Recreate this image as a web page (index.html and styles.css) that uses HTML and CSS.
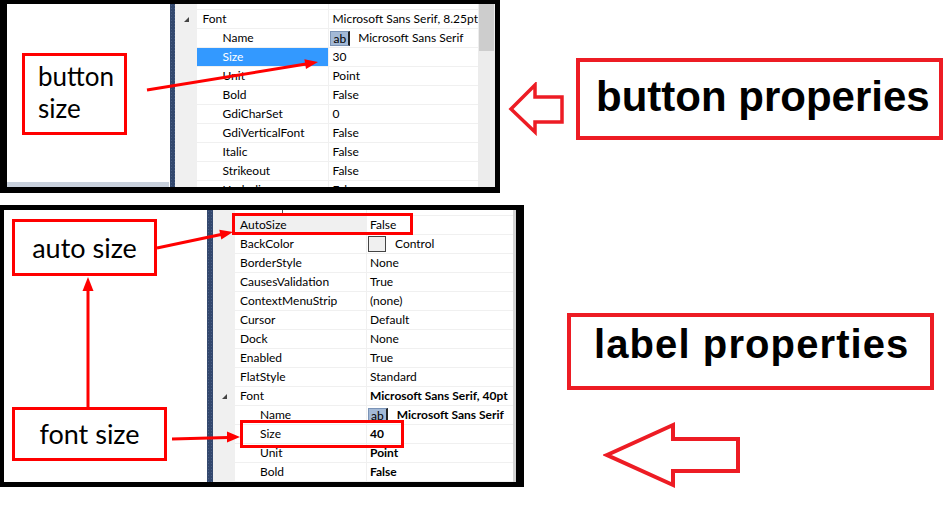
FILE: index.html
```html
<!DOCTYPE html>
<html lang="en">
<head>
  <meta charset="UTF-8">
  <title>Button and label properties</title>
  <link rel="stylesheet" href="styles.css">
</head>
<body>
  <div class="page">

    <!-- Button properties -->
    <div class="band band-top">
      <section class="panel panel-btn">
        <div class="blank">
          <div class="note note-btn">button<br>size</div>
          <div class="blank-bar"></div>
        </div>
        <div class="strip"></div>
        <div class="grid">
          <div class="grid-body">
            <div class="row stub"><span class="gut"></span><span class="k"></span><span class="v"></span></div>
            <div class="row"><span class="gut"><i class="tri"></i></span><span class="k">Font</span><span class="v">Microsoft Sans Serif, 8.25pt</span></div>
            <div class="row"><span class="gut"></span><span class="k sub">Name</span><span class="v"><b class="ab">ab</b>Microsoft Sans Serif</span></div>
            <div class="row"><span class="gut"></span><span class="k sub picked">Size</span><span class="v">30</span></div>
            <div class="row"><span class="gut"></span><span class="k sub">Unit</span><span class="v">Point</span></div>
            <div class="row"><span class="gut"></span><span class="k sub">Bold</span><span class="v">False</span></div>
            <div class="row"><span class="gut"></span><span class="k sub">GdiCharSet</span><span class="v">0</span></div>
            <div class="row"><span class="gut"></span><span class="k sub">GdiVerticalFont</span><span class="v">False</span></div>
            <div class="row"><span class="gut"></span><span class="k sub">Italic</span><span class="v">False</span></div>
            <div class="row"><span class="gut"></span><span class="k sub">Strikeout</span><span class="v">False</span></div>
            <div class="row"><span class="gut"></span><span class="k sub">Underline</span><span class="v">False</span></div>
          </div>
          <div class="scroll"><div class="thumb"></div></div>
        </div>
      </section>

      <svg class="hollow hollow-top" width="58" height="54" viewBox="0 0 58 54">
        <polygon points="3,27 27,3 27,15 54,15 54,40 27,40 27,50" fill="none" stroke="#ed1c24" stroke-width="3.5"/>
      </svg>
      <div class="callout callout-btn">button properies</div>
    </div>

    <!-- Label properties -->
    <div class="band band-bottom">
      <section class="panel panel-lbl">
        <div class="blank blank-lbl">
          <div class="note note-auto">auto size</div>
          <div class="note note-font">font size</div>
        </div>
        <div class="strip"></div>
        <div class="grid">
          <div class="grid-body">
            <div class="row stub"><span class="gut"></span><span class="k"><i class="tick"></i></span><span class="v"></span></div>
            <div class="row"><span class="gut"></span><span class="k dim">AutoSize</span><span class="v">False</span></div>
            <div class="row"><span class="gut"></span><span class="k">BackColor</span><span class="v"><i class="swatch"></i>Control</span></div>
            <div class="row"><span class="gut"></span><span class="k">BorderStyle</span><span class="v">None</span></div>
            <div class="row"><span class="gut"></span><span class="k">CausesValidation</span><span class="v">True</span></div>
            <div class="row"><span class="gut"></span><span class="k">ContextMenuStrip</span><span class="v">(none)</span></div>
            <div class="row"><span class="gut"></span><span class="k">Cursor</span><span class="v">Default</span></div>
            <div class="row"><span class="gut"></span><span class="k">Dock</span><span class="v">None</span></div>
            <div class="row"><span class="gut"></span><span class="k">Enabled</span><span class="v">True</span></div>
            <div class="row"><span class="gut"></span><span class="k">FlatStyle</span><span class="v">Standard</span></div>
            <div class="row"><span class="gut"><i class="tri"></i></span><span class="k">Font</span><span class="v strong">Microsoft Sans Serif, 40pt</span></div>
            <div class="row"><span class="gut"></span><span class="k sub">Name</span><span class="v strong"><b class="ab">ab</b>Microsoft Sans Serif</span></div>
            <div class="row"><span class="gut"></span><span class="k sub">Size</span><span class="v strong">40</span></div>
            <div class="row"><span class="gut"></span><span class="k sub">Unit</span><span class="v strong">Point</span></div>
            <div class="row"><span class="gut"></span><span class="k sub">Bold</span><span class="v strong">False</span></div>
          </div>
          <div class="edge"></div>
        </div>
      </section>

      <div class="side">
        <div class="callout callout-lbl">label properties</div>
        <svg class="hollow hollow-bottom" width="140" height="68" viewBox="0 0 140 68">
          <polygon points="4,34 70,4 70,18 135,18 135,50 70,50 70,64" fill="none" stroke="#ed1c24" stroke-width="4"/>
        </svg>
      </div>
    </div>

    <!-- red markers drawn over the screenshots -->
    <svg class="pointers" width="951" height="517" viewBox="0 0 951 517">
      <g stroke="#ff0000" stroke-width="3" fill="none">
        <line x1="147" y1="90" x2="306" y2="64"/>
        <line x1="157" y1="248" x2="221" y2="234.5"/>
        <line x1="88" y1="407" x2="88" y2="289"/>
        <line x1="172" y1="439" x2="228" y2="437.5"/>
        <rect x="233.5" y="214.5" width="178" height="19"/>
        <rect x="241.5" y="421.5" width="161" height="25"/>
      </g>
      <g fill="#ff0000">
        <polygon points="318,62 306,69 304.4,59.2"/>
        <polygon points="233,232 221.3,239.6 219.3,229.8"/>
        <polygon points="88,277 82.5,291 93.5,291"/>
        <polygon points="240,437 227,442.5 227,431.5"/>
      </g>
    </svg>

  </div>
</body>
</html>
```

FILE: styles.css
```css
/* Page */
body {
  margin: 0;
  background-color: #ffffff;
  font-family: Lato, "Open Sans", sans-serif;
  color: #000000;
}
.page {
  position: relative;
  width: 951px;
  height: 517px;
  overflow: hidden;
}
.band {
  display: flex;
  align-items: flex-start;
}
.band-bottom {
  margin-top: 12px;
}

/* Screenshot panels */
.panel {
  box-sizing: border-box;
  display: flex;
  border-style: solid;
  border-color: #000000;
  background-color: #ffffff;
  overflow: hidden;
}
.panel-btn {
  width: 500px;
  height: 193px;
  border-width: 4px 5px 6px 7px;
}
.panel-lbl {
  width: 524px;
  height: 282px;
  border-width: 5px 8px 5px 4px;
}

.blank {
  width: 164px;
  display: flex;
  flex-direction: column;
  align-items: flex-start;
}
.blank-bar {
  margin-top: auto;
  align-self: stretch;
  height: 5px;
  margin-right: 1px;
  background-color: #c8d0dc;
}
.blank-lbl {
  width: 203px;
  box-sizing: border-box;
  justify-content: space-between;
  padding: 9px 0 21px 8px;
}
.strip {
  width: 6px;
  background-color: #33486e;
  background-image: radial-gradient(#4a5f86 0.6px, transparent 0.8px);
  background-size: 3px 3px;
}

/* Annotation boxes inside the screenshots */
.note {
  box-sizing: border-box;
  border: 3px solid #ff0000;
  font-size: 26px;
  line-height: 32px;
  background-color: #ffffff;
}
.note-btn {
  width: 105px;
  height: 82px;
  margin: 49px 0 0 15px;
  padding: 4px 0 0 13px;
}
.note-auto,
.note-font {
  display: flex;
  align-items: center;
  justify-content: center;
  font-size: 27px;
}
.note-auto {
  width: 145px;
  height: 57px;
}
.note-font {
  width: 155px;
  height: 54px;
}

/* Property grid */
.grid {
  flex: 1;
  display: flex;
  font-size: 12px;
}
.grid-body {
  flex: 1;
  display: flex;
  flex-direction: column;
  overflow: hidden;
}
.row {
  display: flex;
  height: 19px;
  flex-shrink: 0;
}
.row.stub {
  height: 6px;
}
.gut {
  width: 22px;
  display: flex;
  align-items: center;
  justify-content: center;
  background-color: #f0f0f0;
}
.k {
  box-sizing: border-box;
  width: 132px;
  padding-left: 5px;
  line-height: 18px;
  border-right: 1px solid #f0f0f0;
  border-bottom: 1px solid #f0f0f0;
  white-space: nowrap;
}
.k.sub {
  padding-left: 25px;
}
.k.picked {
  background-color: #3399ff;
  color: #ffffff;
}
.k.dim {
  background-color: #f0f0f0;
}
.tick {
  display: block;
  width: 1px;
  height: 3px;
  margin-left: 42px;
  background-color: #555555;
}
.v {
  flex: 1;
  display: flex;
  align-items: center;
  padding-left: 3px;
  line-height: 18px;
  border-bottom: 1px solid #f0f0f0;
  white-space: nowrap;
}
.v.strong {
  font-weight: bold;
}
.tri {
  width: 0;
  height: 0;
  margin-left: 1px;
  border-left: 5px solid transparent;
  border-bottom: 5px solid #444444;
}
.ab {
  box-sizing: border-box;
  height: 15px;
  line-height: 13px;
  padding: 0 2px;
  margin: 0 8px 0 -2px;
  font-weight: normal;
  background-color: #a3b9d6;
  border: 1px solid #7a93b6;
  border-right: 2px solid #222222;
}
.v.strong .ab {
  margin-right: 9px;
}
.swatch {
  width: 18px;
  height: 16px;
  margin: 0 9px 0 -2px;
  box-sizing: border-box;
  background-color: #f0f0f0;
  border: 1px solid #444444;
}
.scroll {
  width: 17px;
  background-color: #ececec;
}
.thumb {
  height: 47px;
  margin: 0 1px;
  background-color: #cdcdcd;
}
.edge {
  width: 3px;
  background-color: #d4d4d4;
}

/* Right-hand callouts */
.hollow-top {
  margin: 82px 0 0 8px;
}
.callout {
  box-sizing: border-box;
  border: 4px solid #ed1c24;
  font-family: "Liberation Sans", Arial, sans-serif;
  font-weight: bold;
  line-height: 1;
  background-color: #ffffff;
}
.callout-btn {
  width: 367px;
  height: 82px;
  margin: 58px 0 0 10px;
  padding: 14px 0 0 16px;
  font-size: 42px;
}
.side {
  display: flex;
  flex-direction: column;
  align-items: flex-start;
  margin-left: 43px;
  padding-top: 108px;
}
.callout-lbl {
  width: 367px;
  height: 77px;
  padding: 7px 0 0 23px;
  font-size: 40px;
  letter-spacing: 1.1px;
}
.hollow-bottom {
  margin: 31px 0 0 36px;
}

/* Marker layer */
.pointers {
  position: absolute;
  top: 0;
  left: 0;
  pointer-events: none;
}
```
